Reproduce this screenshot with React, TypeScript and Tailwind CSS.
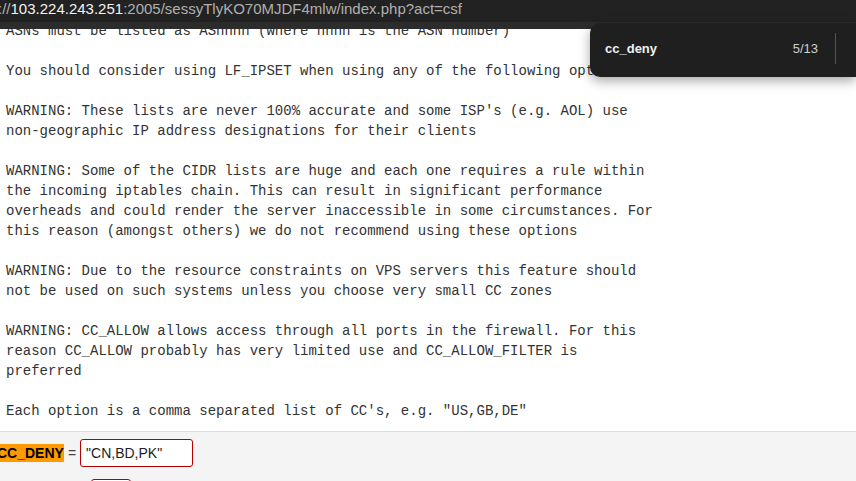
const lines = [
  'ASNs must be listed as ASnnnn (where nnnn is the ASN number)',
  '',
  'You should consider using LF_IPSET when using any of the following options:',
  '',
  "WARNING: These lists are never 100% accurate and some ISP's (e.g. AOL) use",
  'non-geographic IP address designations for their clients',
  '',
  'WARNING: Some of the CIDR lists are huge and each one requires a rule within',
  'the incoming iptables chain. This can result in significant performance',
  'overheads and could render the server inaccessible in some circumstances. For',
  'this reason (amongst others) we do not recommend using these options',
  '',
  'WARNING: Due to the resource constraints on VPS servers this feature should',
  'not be used on such systems unless you choose very small CC zones',
  '',
  'WARNING: CC_ALLOW allows access through all ports in the firewall. For this',
  'reason CC_ALLOW probably has very limited use and CC_ALLOW_FILTER is',
  'preferred',
  '',
  'Each option is a comma separated list of CC\'s, e.g. "US,GB,DE"',
];

export default function App() {
  return (
    <div className="relative flex h-[481px] w-[856px] flex-col overflow-hidden bg-white">
      {/* address bar */}
      <div className="flex h-[22px] shrink-0 items-start overflow-hidden bg-[#222222] pt-[1px] font-['Liberation_Sans',Arial,sans-serif] text-[15px] leading-[16px] whitespace-nowrap">
        <span className="-ml-[2px] text-[#b0b0b0]">://</span>
        <span className="text-[#f2f2f2]">103.224.243.251</span>
        <span className="text-[#b0b0b0]">:2005/sessyTlyKO70MJDF4mlw/index.php?act=csf</span>
      </div>
      <div className="h-[7px] shrink-0 bg-[#2c2c2c]" />

      {/* scrolled page */}
      <div className="flex-1 overflow-hidden">
        <pre className="-mt-[8px] px-[6px] pb-[10px] font-['Liberation_Mono','Courier_New',monospace] text-[14px] leading-[20px] text-[#333333]">
          {lines.join('\n')}
        </pre>
        <div className="border-t border-[#dddddd] bg-[#f4f4f4] pt-[7px] font-['Liberation_Sans',Arial,sans-serif] text-[14px] text-[#333333]">
          <div className="flex items-center">
            <span className="-ml-[3px] bg-[#ff9900] leading-[18px] font-bold text-black">CC_DENY</span>
            <span className="mx-[4px] text-[#444]">=</span>
            <div className="flex h-[28px] w-[113px] items-center rounded-[3px] border border-[#b30000] bg-white px-[5px] text-[14px] text-[#222]">
              "CN,BD,PK"
            </div>
          </div>
          <div className="mt-[12px] ml-[91px] h-[20px] w-[40px] rounded-[3px] border border-[#b30000] bg-white" />
        </div>
      </div>

      {/* find bar */}
      <div className="absolute top-[23px] left-[590px] right-0 flex h-[54px] items-center rounded-l-[10px] bg-[#1f1f1f] pl-[15px] pb-[3px] font-['Liberation_Sans',Arial,sans-serif] text-[13px] shadow-[0_4px_12px_rgba(0,0,0,0.35)]">
        <span className="font-bold text-[#f0f0f0]">cc_deny</span>
        <span className="ml-auto text-[#d0d0d0]">5/13</span>
        <div className="ml-[17px] mr-[20px] h-[31px] w-px bg-[#555555]" />
      </div>
    </div>
  );
}
